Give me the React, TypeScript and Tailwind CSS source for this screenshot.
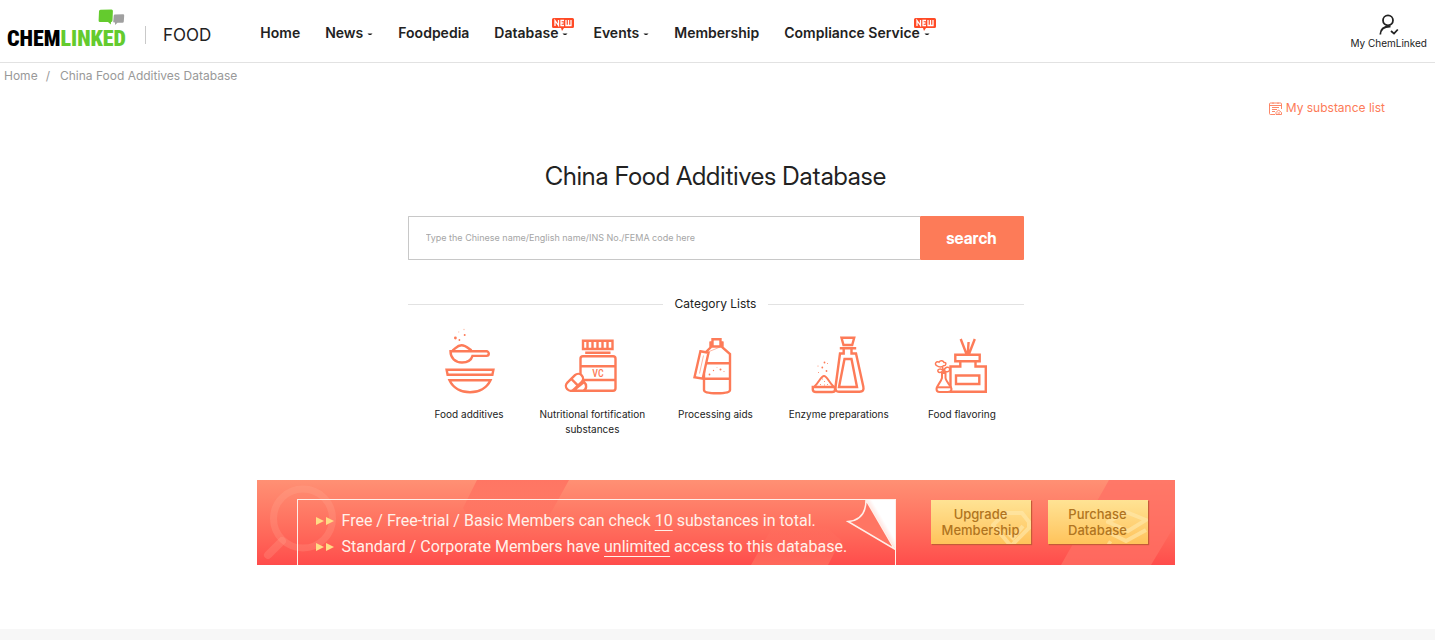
import type { ReactNode } from "react";

const navItems = [
  { label: "Home", menu: false, isNew: false },
  { label: "News", menu: true, isNew: false },
  { label: "Foodpedia", menu: false, isNew: false },
  { label: "Database", menu: true, isNew: true },
  { label: "Events", menu: true, isNew: false },
  { label: "Membership", menu: false, isNew: false },
  { label: "Compliance Service", menu: true, isNew: true },
];

function NewBadge() {
  return (
    <svg className="absolute -top-[5px] -right-1.5 h-3.5 w-[22px]" viewBox="0 0 22 14" aria-hidden="true">
      <path d="M1.500 0h19A1.500 1.500 0 0 1 22 1.500v7A1.500 1.500 0 0 1 20.500 10H12l-2 3-1-3H1.500A1.500 1.500 0 0 1 0 8.500v-7A1.500 1.500 0 0 1 1.500 0Z" fill="#ff4a26" />
      <path d="M3 8V2.500L6.500 7.500V2M12 2.500H9V7.500H12M9 5H11.500M14 2V7.500H19V2M16.500 2V7.500" fill="none" stroke="#fff" strokeWidth="1.300" />
    </svg>
  );
}

function Header() {
  return (
    <header className="flex h-[63px] items-stretch border-b border-[#e2e2e2]">
      <a href="#" aria-label="ChemLinked" className="flex w-[118px] ml-[7px] flex-col items-end pt-[9px]">
        <svg className="h-4 w-[27px]" viewBox="0 0 27 16" aria-hidden="true">
          <path d="M2.500 0.800 13.500 0.500Q15 0.500 14.900 2L14.500 11.500Q14.400 13 13 13L12.800 15.500 10 13H2Q.500 13 .600 11.500L1 2.200Q1 .900 2.500.800Z" fill="#64cb2e" />
          <path d="M17 5.500 25 5.200Q26.300 5.200 26.200 6.500L25.800 12.500Q25.700 13.700 24.500 13.700H19.500L17 16V13.500L15.200 13.300 15.700 6.700Q15.800 5.500 17 5.500Z" fill="#a0a0a0" />
        </svg>
        <span className="w-full whitespace-nowrap font-['Roboto_Condensed','Open_Sans_Condensed','Roboto',sans-serif] text-[22px] leading-[28px] font-black text-black">
          CHEM<span className="text-[#64cb2e]">LINKED</span>
        </span>
      </a>
      <div className="ml-5 flex items-center pt-2">
        <a href="#" className="border-l border-[#c9c9c9] pl-[17px] text-[17px] leading-[18px]">FOOD</a>
      </div>
      <nav className="ml-[49px] flex items-center gap-[25px] pt-1">
        {navItems.map((item) => (
          <a key={item.label} href="#" className="relative flex items-center gap-1 whitespace-nowrap text-[14px] leading-5 font-semibold">
            {item.label}
            {item.menu && (
              <svg className="mt-0.5 h-[3px] w-1.5" viewBox="0 0 6 3" aria-hidden="true">
                <path d="M.500 .500h5L4 2H2Z" fill="#222" />
              </svg>
            )}
            {item.isNew && <NewBadge />}
          </a>
        ))}
      </nav>
      <a href="#" className="mr-2 ml-auto flex flex-col items-center pt-[14px] text-[10px] leading-[14px]">
        <svg className="h-[22px] w-[20px]" viewBox="0 0 20 22" fill="none" stroke="#222" strokeWidth="1.800" aria-hidden="true">
          <circle cx="9" cy="6.300" r="5" />
          <path d="M1.300 20.500C1.500 15 5 12.300 11.500 12.500M12 17l3 2.600 3.800-4.100" />
        </svg>
        My ChemLinked
      </a>
    </header>
  );
}

function Drawing({ children }: { children: ReactNode }) {
  return (
    <svg className="h-[70px] w-16" viewBox="0 0 64 70" fill="none" stroke="#fd7b58" strokeWidth="2.400" aria-hidden="true">
      {children}
    </svg>
  );
}

function BowlIcon() {
  return (
    <Drawing>
      <path d="M9.600 41.800H56.400L55.400 46.800H10.600ZM12.500 52.300H53.500C50 60 42 64.300 33 64.300S16 60 12.500 52.300Z" />
      <path d="M13.500 23.300H49.500a2.300 2.300 0 0 1 0 4.600H35.500C34 33 30 34.500 25 34.500 18 34.500 13.500 30 13.500 23.300Z" />
      <path d="M15.500 22.500C19 20 20.500 17.300 24.500 17.300S31 20 34.500 22.500" />
      <g fill="#fd7b58" stroke="none">
        <circle cx="18.400" cy="10" r="1.400" />
        <circle cx="22.400" cy="12" r=".900" />
        <circle cx="27.700" cy="7" r="1" />
        <circle cx="27" cy="1.500" r=".700" opacity=".5" />
        <circle cx="21.700" cy="4" r=".700" opacity=".4" />
      </g>
    </Drawing>
  );
}

function PillsIcon() {
  return (
    <Drawing>
      <path d="M23 12.700H52.500V21H23ZM27.500 13V21M32.500 13V21M37.500 13V21M42.500 13V21M47.500 13V21M25.200 24.700H50.500" />
      <rect x="20.500" y="28.300" width="35" height="34.500" rx="2.500" />
      <path d="M20.500 38.200H55M20.500 52H55" />
      <text x="38" y="48.500" textAnchor="middle" fill="#fd7b58" stroke="none" className="font-['Roboto_Condensed','Roboto',sans-serif] text-[10px] font-medium">VC</text>
      <path d="M13 62.800H23C27 61.500 27 56.500 24 54Z" fill="#fff" />
      <rect x="4.500" y="49.500" width="20" height="9.500" rx="4.700" transform="rotate(-44 14.500 54.300)" fill="#fff" />
      <path d="M11.300 50.800 18 57.700" />
    </Drawing>
  );
}

function BottleIcon() {
  return (
    <Drawing>
      <path d="M29.500 11.300H37.500V18.500H29.500ZM26.500 14.500H29M38 14.500H40.500M27.500 14V19.500L21 26V62Q21 65.300 34 65.300T47 62V26L39.500 19.500V14M21 35.300H47M21 50.700H47" />
      <path d="M17.400 23.300 25.500 24.800 19.700 50.700 11.500 49.200Z" fill="#fff" />
      <path d="M20.500 27.500 16.500 45.500M25 24 37 19" strokeWidth=".800" opacity=".7" />
      <g fill="#fd7b58" stroke="none">
        <circle cx="37.500" cy="41.500" r="1" />
        <circle cx="26.500" cy="46.500" r=".900" />
        <circle cx="30.500" cy="42.500" r=".700" />
        <circle cx="41" cy="43.500" r=".500" />
        <circle cx="34" cy="39.500" r=".400" />
      </g>
    </Drawing>
  );
}

function EnzymeIcon() {
  return (
    <Drawing>
      <path d="M34.500 9.800H47.200L45.200 17H36.500ZM32.800 20.300H49.200M36.700 20.500V25.500H33L28.500 59Q28 63.800 32 63.800H52.500Q57.500 63.800 56.300 58.500L49 25.500H44.500V20.500M37.500 31H44.500L50 59H32Z" />
      <path d="M5.800 59H28V62Q28 64 25 64H9Q5.800 64 5.800 61.500Z" fill="#fff" />
      <path d="M7.500 58.500C12 54.500 14 48 17 48S22 54.500 26.500 58.500" strokeWidth="2" />
      <path d="M13 56.500h1M17 53.500h1M20 56.500h1M17 57h1M15 51h1" strokeWidth=".800" />
      <g fill="#fd7b58" stroke="none">
        <circle cx="15.300" cy="39.500" r=".900" />
        <circle cx="17.500" cy="34.500" r=".900" />
        <circle cx="19.500" cy="43" r=".900" />
        <circle cx="11" cy="38" r=".500" />
        <circle cx="11.500" cy="44.500" r=".500" />
        <circle cx="20.500" cy="35.500" r=".500" />
      </g>
    </Drawing>
  );
}

function DiffuserIcon() {
  return (
    <Drawing>
      <path d="M30.700 11 36.500 26M44.800 11 39 26M38.600 14 37.700 26M25.300 26.700H49.700V33.300H25.300ZM30.300 33.500V38.500H20.500V63.800H55.800V38.500H45.500V33.500M26 47.500H49.300V56H26Z" />
      <path d="M12 45V50C11 54 6.500 58 6.500 61Q6.500 64 9.500 64H18Q21.500 64 21.500 61C21.500 58 16 54 15.500 50V45Z" fill="#fff" strokeWidth="2" />
      <path d="M7 59.300H21" strokeWidth="2" />
      <path d="M6.500 37.500C4 36 6.500 32.500 9 34.200 10.500 31.500 13.500 33 14 34.500 17 34 16 38 13.500 37.800 11 40 8.500 39 6.500 37.500ZM14 45 12.500 39M8 43.500C7 41 11 40 13 42.500 11 45 9 45 8 43.500ZM14.500 42.500C14 39.500 19.500 37.500 19.500 41 21 43 16 45 14.500 42.500Z" fill="#fff" strokeWidth="1.500" />
    </Drawing>
  );
}

const categories = [
  { label: "Food additives", icon: <BowlIcon /> },
  { label: "Nutritional fortification substances", icon: <PillsIcon /> },
  { label: "Processing aids", icon: <BottleIcon /> },
  { label: "Enzyme preparations", icon: <EnzymeIcon /> },
  { label: "Food flavoring", icon: <DiffuserIcon /> },
];

function Arrows() {
  return (
    <svg className="h-2.5 w-[18px] shrink-0" viewBox="0 0 18 10" aria-hidden="true">
      <path d="M0 1 8 5 0 9ZM10 1l8 4-8 4Z" fill="#ffdc85" />
    </svg>
  );
}

function Banner() {
  return (
    <section className="relative mx-auto mt-[43px] flex h-[85px] w-full max-w-[918px] overflow-hidden bg-linear-to-b from-[#ff9074] to-[#ff4c4b] pt-[19px] pl-10">
      <svg className="absolute inset-0 h-full w-full" viewBox="0 0 918 85" preserveAspectRatio="none" aria-hidden="true">
        <defs>
          <linearGradient id="fade" x1="0" y1="0" x2="0" y2="1">
            <stop offset="0" stopColor="#ff6a5c" stopOpacity=".7" />
            <stop offset="1" stopColor="#ff6a5c" stopOpacity="0" />
          </linearGradient>
          <linearGradient id="rise" x1="0" y1="0" x2="0" y2="1">
            <stop offset="0" stopColor="#ff7462" stopOpacity=".1" />
            <stop offset="1" stopColor="#ff7462" stopOpacity=".7" />
          </linearGradient>
        </defs>
        <path d="M220 0H312L280 58H222L206 28Z" fill="url(#fade)" />
        <path d="M494 85 515 48H570L584 60 571 85Z" fill="url(#rise)" />
        <path d="M852 0H918V45L894 85H804Z" fill="#ff7064" fillOpacity=".75" />
        <g fill="none" stroke="#ffb19c" strokeOpacity=".22">
          <circle cx="46" cy="38.500" r="29.500" strokeWidth="7" />
          <path d="M25 61 11 75" strokeWidth="8" strokeLinecap="round" />
        </g>
      </svg>
      <div className="relative w-[599px] shrink-0 border border-b-0 border-[#ffefe9] pt-2 pl-[18px] font-['Roboto',sans-serif] text-[16px] leading-[26px] text-[#fff1ea]">
        <p className="flex items-center gap-2 whitespace-nowrap">
          <Arrows />
          <span>Free / Free-trial / Basic Members can check <span className="underline underline-offset-4">10</span> substances in total.</span>
        </p>
        <p className="flex items-center gap-2 whitespace-nowrap">
          <Arrows />
          <span>Standard / Corporate Members have <span className="underline underline-offset-4">unlimited</span> access to this database.</span>
        </p>
        <svg className="absolute -top-px -right-px h-[52px] w-[50px]" viewBox="0 0 50 52" aria-hidden="true">
          <defs>
            <linearGradient id="fold" x1="0" y1="1" x2="1" y2="0">
              <stop offset=".450" stopColor="#ffdcd6" />
              <stop offset=".600" stopColor="#fff" />
            </linearGradient>
          </defs>
          <path d="M20 1H49V50Z" fill="url(#fold)" />
          <path d="M20 1Q20 21 2 22.500L48.500 50Z" fill="#ff7563" stroke="#ffefe9" strokeWidth="1.500" />
        </svg>
      </div>
      <div className="relative ml-[35px] flex items-start gap-[17px] text-[#b07420]">
        <button type="button" className="relative mt-px h-11 w-[100px] overflow-hidden bg-linear-to-b from-[#ffe394] to-[#ffc35a] text-[13px] leading-4 font-medium shadow-[1px_1px_1px_#c55a38]">
          <svg className="absolute top-2.5 right-0 h-[34px] w-10" viewBox="0 0 40 34" fill="none" stroke="#ffe9ad" strokeWidth="4" strokeOpacity=".6" aria-hidden="true">
            <path d="M2 15 14 3H31L38 12V18L20 36ZM14 20l8 8 10-12" />
          </svg>
          <span className="relative">Upgrade<br />Membership</span>
        </button>
        <button type="button" className="relative mt-px h-11 w-[100px] overflow-hidden bg-linear-to-b from-[#ffe394] to-[#ffc35a] text-[13px] leading-4 font-medium shadow-[1px_1px_1px_#c55a38]">
          <svg className="absolute top-2.5 right-0 h-[34px] w-[42px]" viewBox="0 0 42 34" fill="none" stroke="#ffe9ad" strokeWidth="4" strokeOpacity=".6" aria-hidden="true">
            <path d="M2 12 20 2 40 10 22 21ZM2 22l18 9 20-11M2 32l3 2" />
          </svg>
          <span className="relative">Purchase<br />Database</span>
        </button>
      </div>
    </section>
  );
}

export default function App() {
  return (
    <div className="flex min-h-screen flex-col bg-white font-['Inter',sans-serif] text-[#222]">
      <Header />
      <nav aria-label="Breadcrumb" className="flex gap-2 pt-1 pl-1 text-[12px] leading-[18px] text-[#999]">
        <a href="#">Home</a>
        <span>/</span>
        <a href="#" className="ml-0.5">China Food Additives Database</a>
      </nav>
      <div className="flex justify-end pt-3.5 pr-[50px]">
        <a href="#" className="flex items-center gap-1 text-[12px] leading-[18px] text-[#fd7b58]">
          <svg className="h-[13px] w-[13px]" viewBox="0 0 13 13" fill="none" stroke="#fd7b58" strokeWidth=".900" aria-hidden="true">
            <path d="M6 12.500H1.500Q.500 12.500 .500 11.500V2Q.500 1 1.500 1H11.500Q12.500 1 12.500 2V7M.500 3.500H12.500M4 .500V2M9 .500V2M3 5.500H10M3 7.500H8M3 9.500H6M7 12.500V10.500L9.500 8 12.500 10.500V12.500ZM8.500 11h2.500" />
          </svg>
          My substance list
        </a>
      </div>
      <main className="pr-1 pb-16">
        <h1 className="mt-[41px] text-center font-['Inter_Display','Inter',sans-serif] text-[25px] leading-9">China Food Additives Database</h1>
        <div className="mx-auto mt-[22px] w-full max-w-[616px]">
          <form className="flex h-11" onSubmit={(event) => event.preventDefault()}>
            <input
              type="text"
              aria-label="Substance"
              placeholder="Type the Chinese name/English name/INS No./FEMA code here"
              className="min-w-0 flex-1 rounded-l-[1px] border border-r-0 border-[#c8c8c8] px-[17px] text-[9px] outline-none placeholder:text-[#a5a5a5]"
            />
            <button type="submit" className="w-[104px] rounded-[1px] bg-[#fd7b58] font-['Inter_Display','Inter',sans-serif] text-[16px] font-bold text-white">search</button>
          </form>
          <h2 className="mt-[35px] flex items-center gap-3 text-[12px] leading-[18px] before:h-px before:flex-1 before:bg-[#e2e2e2] after:h-px after:flex-1 after:bg-[#e2e2e2]">
            Category Lists
          </h2>
          <ul className="mt-[15px] grid grid-cols-5">
            {categories.map((category) => (
              <li key={category.label}>
                <a href="#" className="flex flex-col items-center gap-[9px] text-center text-[10px] leading-[15px]">
                  {category.icon}
                  <span>{category.label}</span>
                </a>
              </li>
            ))}
          </ul>
        </div>
        <Banner />
      </main>
      <footer className="flex-1 bg-[#f7f7f7]" />
    </div>
  );
}
